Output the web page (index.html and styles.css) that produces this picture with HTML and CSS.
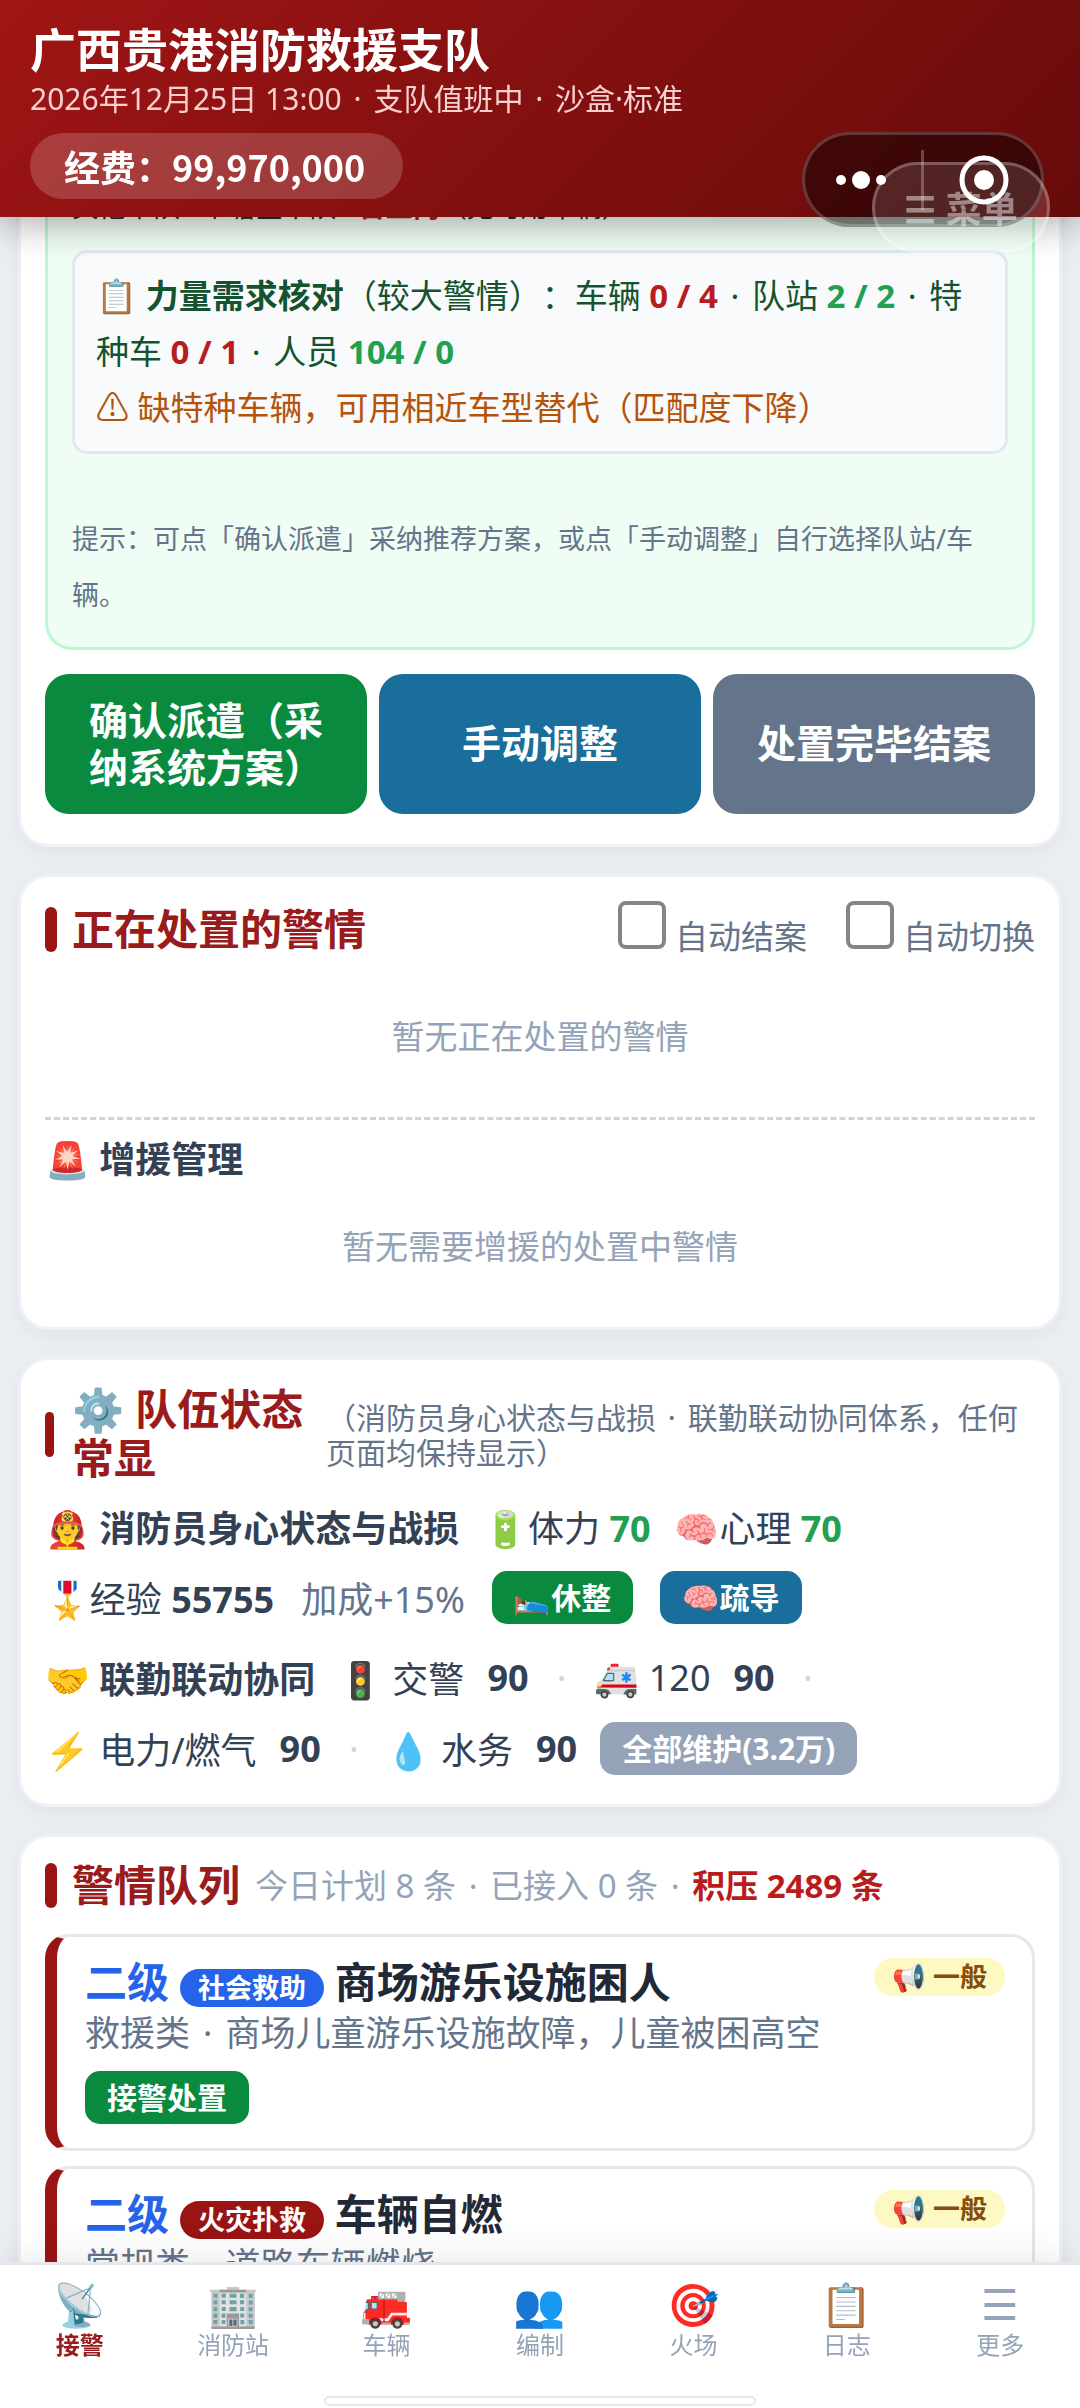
FILE: index.html
```html
<!DOCTYPE html>
<html lang="zh-CN">
<head>
  <meta charset="UTF-8">
  <meta name="viewport" content="width=device-width, initial-scale=1.0">
  <title>广西贵港消防救援支队</title>
  <link rel="stylesheet" href="styles.css">
</head>
<body>
  <header class="topbar">
    <h1>广西贵港消防救援支队</h1>
    <div class="meta">2026年12月25日 13:00 <span class="dot">·</span> 支队值班中 <span class="dot">·</span> 沙盒·标准</div>
    <div class="funds">经费：99,970,000</div>
  </header>

  <!-- 右上角胶囊 + 悬浮菜单 -->
  <div class="capsule"></div>
  <button class="menu-btn">☰ 菜单</button>
  <svg class="capsule-icons" viewBox="0 0 242 95" fill="#fff">
    <circle cx="39" cy="48" r="5"/>
    <circle cx="59" cy="48" r="9"/>
    <circle cx="79" cy="48" r="5"/>
    <rect x="119" y="18" width="3" height="60" opacity=".25"/>
    <circle cx="182" cy="48" r="22" fill="none" stroke="#fff" stroke-width="5"/>
    <circle cx="182" cy="48" r="10"/>
  </svg>

  <main>
    <section class="card">
      <div class="plan">
        <div class="plan-line">其他中队 · 覃塘区中队 <b class="bad">0台上岗</b>（无可用车辆）</div>
        <div class="check">
          📋 <b>力量需求核对</b>（较大警情）：车辆 <b class="bad">0 / 4</b> <span class="dot">·</span> 队站 <b class="ok">2 / 2</b> <span class="dot">·</span> 特种车 <b class="bad">0 / 1</b> <span class="dot">·</span> 人员 <b class="ok">104 / 0</b>
          <div class="warn">⚠ 缺特种车辆，可用相近车型替代（匹配度下降）</div>
        </div>
        <p class="hint">提示：可点「确认派遣」采纳推荐方案，或点「手动调整」自行选择队站/车辆。</p>
      </div>
      <div class="actions">
        <button class="green">确认派遣（采纳系统方案）</button>
        <button class="blue">手动调整</button>
        <button class="gray">处置完毕结案</button>
      </div>
    </section>

    <section class="card">
      <div class="card-head">
        <h2>正在处置的警情</h2>
        <div class="toggles">
          <label><input type="checkbox"> 自动结案</label>
          <label><input type="checkbox"> 自动切换</label>
        </div>
      </div>
      <div class="empty">暂无正在处置的警情</div>
      <div class="support">
        <h3>🚨 增援管理</h3>
        <div class="empty">暂无需要增援的处置中警情</div>
      </div>
    </section>

    <section class="card team-card">
      <div class="card-head team-head">
        <h2>⚙️ 队伍状态常显</h2>
        <span class="desc">（消防员身心状态与战损 <span class="dot">·</span> 联勤联动协同体系，任何页面均保持显示）</span>
      </div>
      <div class="team">
        <div class="row">
          <b>🧑‍🚒 消防员身心状态与战损</b>
          <span>🔋体力 <b class="ok">70</b></span>
          <span>🧠心理 <b class="ok">70</b></span>
        </div>
        <div class="row exp">
          <span>🎖️经验 <b>55755</b></span>
          <span class="muted">加成+15%</span>
          <button class="small green">🛌休整</button>
          <button class="small blue">🧠疏导</button>
        </div>
      </div>
      <div class="team">
        <div class="row link">
          <b>🤝 联勤联动协同</b>
          <span>🚦 交警</span> <b>90</b> <i>·</i>
          <span>🚑 120</span> <b>90</b> <i>·</i>
        </div>
        <div class="row link">
          <span>⚡ 电力/燃气</span> <b>90</b> <i>·</i>
          <span>💧 水务</span> <b>90</b>
          <button class="small light">全部维护(3.2万)</button>
        </div>
      </div>
    </section>

    <section class="card">
      <div class="card-head queue-head">
        <h2>警情队列</h2>
        <span class="count">今日计划 8 条 <span class="dot">·</span> 已接入 0 条 <span class="dot">·</span> <b>积压 2489 条</b></span>
      </div>
      <article class="alarm">
        <div class="alarm-top">
          <div class="alarm-title"><em>二级</em> <span class="tag blue-tag">社会救助</span> 商场游乐设施困人</div>
          <span class="level">📢 一般</span>
        </div>
        <div class="alarm-desc">救援类 <span class="dot">·</span> 商场儿童游乐设施故障，儿童被困高空</div>
        <button class="small green">接警处置</button>
      </article>
      <article class="alarm">
        <div class="alarm-top">
          <div class="alarm-title"><em>二级</em> <span class="tag red-tag">火灾扑救</span> 车辆自燃</div>
          <span class="level">📢 一般</span>
        </div>
        <div class="alarm-desc">常规类 <span class="dot">·</span> 道路车辆燃烧</div>
      </article>
    </section>
  </main>

  <nav class="tabbar">
    <a href="#" class="active"><span>📡</span>接警</a>
    <a href="#"><span>🏢</span>消防站</a>
    <a href="#"><span>🚒</span>车辆</a>
    <a href="#"><span>👥</span>编制</a>
    <a href="#"><span>🎯</span>火场</a>
    <a href="#"><span>📋</span>日志</a>
    <a href="#"><span>☰</span>更多</a>
    <div class="home-bar"></div>
  </nav>
</body>
</html>
```

FILE: styles.css
```css
* {
  box-sizing: border-box;
}
body {
  margin: 0;
  height: 100vh;
  overflow: hidden;
  background: #eceff4;
  color: #334155;
  font-family: "Noto Sans", "Noto Sans CJK SC", "Noto Color Emoji", sans-serif;
  font-size: 36px;
  text-spacing-trim: space-all;
}
h1, h2, h3, p {
  margin: 0;
}
button {
  border: none;
  font-family: inherit;
  font-weight: bold;
  color: #fff;
  cursor: pointer;
}
.dot {
  margin: 0 4px;
}

/* header */
.topbar {
  position: fixed;
  top: 0;
  left: 0;
  right: 0;
  z-index: 10;
  height: 217px;
  padding: 24px 30px 18px;
  background: linear-gradient(135deg, #a01515, #670b0b);
  color: #fff;
  box-shadow: 0 6px 36px rgba(0, 0, 0, 0.35);
}
.topbar h1 {
  font-size: 46px;
  line-height: 50px;
}
.meta {
  font-size: 30px;
  line-height: 50px;
  color: #f8d0d0;
}
.funds {
  display: inline-block;
  margin-top: 9px;
  padding: 0 38px 0 34px;
  border-radius: 33px;
  background: rgba(255, 255, 255, 0.18);
  font-family: "Noto Sans CJK SC", sans-serif;
  font-weight: bold;
  line-height: 66px;
}
.capsule,
.capsule-icons {
  position: fixed;
  top: 132px;
  right: 36px;
  width: 242px;
  height: 95px;
}
.capsule {
  z-index: 11;
  border: 3px solid rgba(255, 255, 255, 0.2);
  border-radius: 48px;
  background: rgba(0, 0, 0, 0.45);
}
.capsule-icons {
  z-index: 13;
}
.menu-btn {
  position: fixed;
  top: 162px;
  right: 30px;
  z-index: 12;
  width: 178px;
  height: 91px;
  padding: 0;
  border: 3px solid rgba(255, 255, 255, 0.25);
  border-radius: 46px;
  background: rgba(255, 255, 255, 0.12);
  color: rgba(255, 255, 255, 0.45);
  font-size: 36px;
}

/* cards */
main {
  padding: 94px 18px 0;
}
.card {
  margin-bottom: 27px;
  padding: 24px;
  border: 3px solid #edf0f5;
  border-radius: 30px;
  background: #fff;
  box-shadow: 0 6px 24px rgba(15, 23, 42, 0.06);
}
.card-head {
  display: flex;
  align-items: center;
}
.card-head::before {
  content: "";
  flex: 0 0 12px;
  height: 45px;
  margin-right: 15px;
  border-radius: 6px;
  background: #9b1414;
}
h2 {
  padding-bottom: 3px;
  font-size: 42px;
  line-height: 49px;
  color: #991b1b;
}
.ok {
  color: #22a04f;
}
.bad {
  color: #b91c1c;
}

/* dispatch plan */
.plan {
  padding: 55px 24px 24px;
  border: 3px solid #bbf7d0;
  border-radius: 27px;
  background: #f0fdf4;
  color: #14532d;
  font-size: 33px;
  line-height: 56px;
}
.plan-line {
  margin-bottom: 15px;
  color: #1f2937;
  font-size: 27px;
}
.check {
  padding: 15px 21px;
  border: 3px solid #e2e8f0;
  border-radius: 15px;
  background: #f8fafc;
}
.warn {
  color: #b45309;
}
.hint {
  margin-top: 57px;
  color: #64748b;
  font-size: 27px;
}
.actions {
  display: grid;
  grid-template-columns: repeat(3, 1fr);
  gap: 12px;
  padding: 24px 0 6px;
}
.actions button {
  min-height: 140px;
  padding: 0 40px 3px;
  border-radius: 24px;
  font-size: 39px;
  line-height: 47px;
}
.actions .gray {
  padding: 0 20px 3px;
}
.green {
  background: #0a8a3f;
}
.blue {
  background: #1a6e9b;
}
.gray {
  background: #64748b;
}
.light {
  background: #94a3b8;
}

/* ongoing */
.toggles {
  display: flex;
  gap: 39px;
  margin-left: auto;
}
.toggles label {
  display: flex;
  gap: 9px;
  padding-top: 15px;
  color: #64748b;
  font-size: 33px;
  line-height: 42px;
}
.toggles input {
  appearance: none;
  width: 48px;
  height: 48px;
  margin: -15px 0 0;
  border: 4px solid #858585;
  border-radius: 8px;
  background: #fff;
}
.empty {
  padding: 51px 0 52px;
  text-align: center;
  color: #94a3b8;
  font-size: 33px;
  line-height: 56px;
}
.support {
  border-top: 3px dashed #cbd5e1;
  padding-top: 14px;
}
.support h3 {
  font-size: 36px;
  line-height: 52px;
}
.support .empty {
  padding: 33px 0 28px;
}

/* team status */
.team-card {
  padding-bottom: 20px;
}
.team-head {
  margin-bottom: -3px;
}
.team-head::before {
  flex-basis: 9px;
  margin-right: 18px;
}
.team-head h2 {
  flex: 0 0 236px;
}
.team-head .desc {
  margin-left: 18px;
  color: #64748b;
  font-size: 30px;
  line-height: 35px;
}
.team {
  padding-top: 9px;
}
.row {
  display: flex;
  align-items: center;
  gap: 24px;
  height: 71px;
}
.exp {
  gap: 27px;
}
.link {
  gap: 23px;
}
.row i {
  width: 20px;
  text-align: center;
  font-style: normal;
  color: #cbd5e1;
}
.muted {
  color: #64748b;
}
.small {
  height: 53px;
  padding: 0 22px;
  border-radius: 15px;
  font-size: 30px;
  line-height: 51px;
}

/* queue */
.queue-head {
  height: 49px;
  margin-bottom: 24px;
}
.count {
  margin-left: 15px;
  padding-bottom: 3px;
  color: #94a3b8;
  font-size: 33px;
}
.count b {
  color: #b91c1c;
}
.alarm {
  margin-bottom: 15px;
  padding: 18px 27px 24px 28px;
  border: 3px solid #e5e7eb;
  border-left: 12px solid #9b1414;
  border-radius: 24px;
}
.alarm-top {
  display: flex;
  justify-content: space-between;
  align-items: flex-start;
}
.alarm-title {
  color: #1f2937;
  font-size: 42px;
  font-weight: bold;
  line-height: 54px;
}
.alarm-title em {
  font-style: normal;
  color: #2563eb;
}
.tag {
  display: inline-block;
  padding: 0 18px;
  border-radius: 19px;
  color: #fff;
  font-size: 27px;
  line-height: 38px;
}
.blue-tag {
  background: #2563eb;
}
.red-tag {
  background: #9b1414;
}
.level {
  margin-top: 3px;
  padding: 0 18px;
  border-radius: 19px;
  background: #fef9c3;
  color: #854d0e;
  font-size: 27px;
  font-weight: bold;
  line-height: 38px;
}
.alarm-desc {
  margin-bottom: 14px;
  color: #64748b;
  font-size: 35px;
  line-height: 48px;
}

/* bottom tabs */
.tabbar {
  position: fixed;
  left: 0;
  right: 0;
  bottom: 0;
  z-index: 10;
  display: flex;
  height: 146px;
  padding: 12px 3px 0;
  border-top: 3px solid #e5e7eb;
  background: #fff;
  box-shadow: 0 -6px 36px rgba(0, 0, 0, 0.08);
}
.tabbar a {
  flex: 1;
  color: #94a3b8;
  font-size: 24px;
  line-height: 28px;
  text-align: center;
  text-decoration: none;
}
.tabbar span {
  display: block;
  font-size: 42px;
  font-weight: normal;
  line-height: 54px;
}
.tabbar .active {
  color: #991b1b;
  font-weight: bold;
}
.home-bar {
  position: absolute;
  left: 30%;
  right: 30%;
  bottom: 2px;
  height: 10px;
  border: 2px solid #e8e8e8;
  border-radius: 5px;
}
```
